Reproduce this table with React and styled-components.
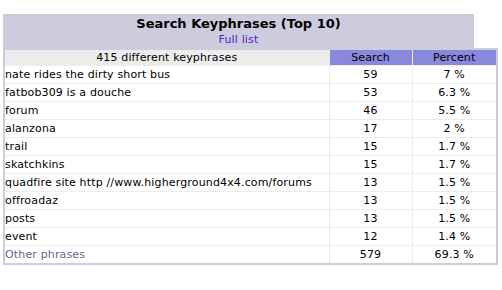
// Search keyphrases report panel
import styled, { createGlobalStyle } from "styled-components";

const GlobalStyle = createGlobalStyle`
  body {
    margin: 0;
    background: #fff;
    font-family: "DejaVu Sans", Verdana, sans-serif;
    color: #000;
  }
`;

const phrases = [
  { text: "nate rides the dirty short bus", hits: 59, pct: "7 %" },
  { text: "fatbob309 is a douche", hits: 53, pct: "6.3 %" },
  { text: "forum", hits: 46, pct: "5.5 %" },
  { text: "alanzona", hits: 17, pct: "2 %" },
  { text: "trail", hits: 15, pct: "1.7 %" },
  { text: "skatchkins", hits: 15, pct: "1.7 %" },
  { text: "quadfire site http //www.higherground4x4.com/forums", hits: 13, pct: "1.5 %" },
  { text: "offroadaz", hits: 13, pct: "1.5 %" },
  { text: "posts", hits: 13, pct: "1.5 %" },
  { text: "event", hits: 12, pct: "1.4 %" },
];

const Page = styled.div`
  padding: 14px 0 0 3px;
`;

const Panel = styled.div`
  width: 495px;
`;

const TitleRow = styled.div`
  display: flex;
`;

const TitleCell = styled.div`
  width: 471px;
  background-color: #ccccdd;
  text-align: center;
  padding: 2px 0 1px;
`;

const Blank = styled.div`
  flex: 1;
  background: #fff;
`;

const Title = styled.div`
  font-size: 13px;
  font-weight: bold;
  line-height: 16px;
`;

const FullList = styled.a`
  display: block;
  font-size: 11px;
  line-height: 15px;
  letter-spacing: 0.15px;
  color: #5518d2;
  text-decoration: none;
`;

const Frame = styled.div`
  background-color: #ccccdd;
  padding: 2px;
`;

const Table = styled.table`
  width: 100%;
  table-layout: fixed;
  border-collapse: collapse;
  background: #fff;
  font-size: 11px;
  letter-spacing: 0.15px;
`;

const Th = styled.th`
  height: 15px;
  padding: 0 1px;
  font-weight: normal;
  text-align: center;
  line-height: 15px;
  background-color: ${p => (p.$accent ? "#8888dd" : "#ececec")};
  border-right: 1px solid #ececec;
  border-bottom: 1px solid #ececec;
  &:last-child {
    border-right: 0;
  }
`;

const Td = styled.td`
  height: 17px;
  padding: 0 1px;
  line-height: 17px;
  text-align: ${p => (p.$left ? "left" : "center")};
  color: ${p => (p.$muted ? "#666688" : "#000")};
  border-right: 1px solid #ececec;
  border-bottom: 1px solid #ececec;
  white-space: nowrap;
  &:first-child {
    padding-left: 0;
  }
  &:last-child {
    border-right: 0;
  }
`;

const LastRow = styled.tr`
  & > td {
    border-bottom: 0;
  }
`;

export default function App() {
  return (
    <>
      <GlobalStyle />
      <Page>
        <Panel>
          <TitleRow>
            <TitleCell>
              <Title>Search Keyphrases (Top 10)</Title>
              <FullList href="#">Full list</FullList>
            </TitleCell>
            <Blank />
          </TitleRow>
          <Frame>
            <Table>
              <colgroup>
                <col style={{ width: 324 }} />
                <col style={{ width: 83 }} />
                <col />
              </colgroup>
              <thead>
                <tr>
                  <Th>415 different keyphrases</Th>
                  <Th $accent>Search</Th>
                  <Th $accent>Percent</Th>
                </tr>
              </thead>
              <tbody>
                {phrases.map(row => (
                  <tr key={row.text}>
                    <Td $left>{row.text}</Td>
                    <Td>{row.hits}</Td>
                    <Td>{row.pct}</Td>
                  </tr>
                ))}
                <LastRow>
                  <Td $left $muted>Other phrases</Td>
                  <Td>579</Td>
                  <Td>69.3 %</Td>
                </LastRow>
              </tbody>
            </Table>
          </Frame>
        </Panel>
      </Page>
    </>
  );
}
